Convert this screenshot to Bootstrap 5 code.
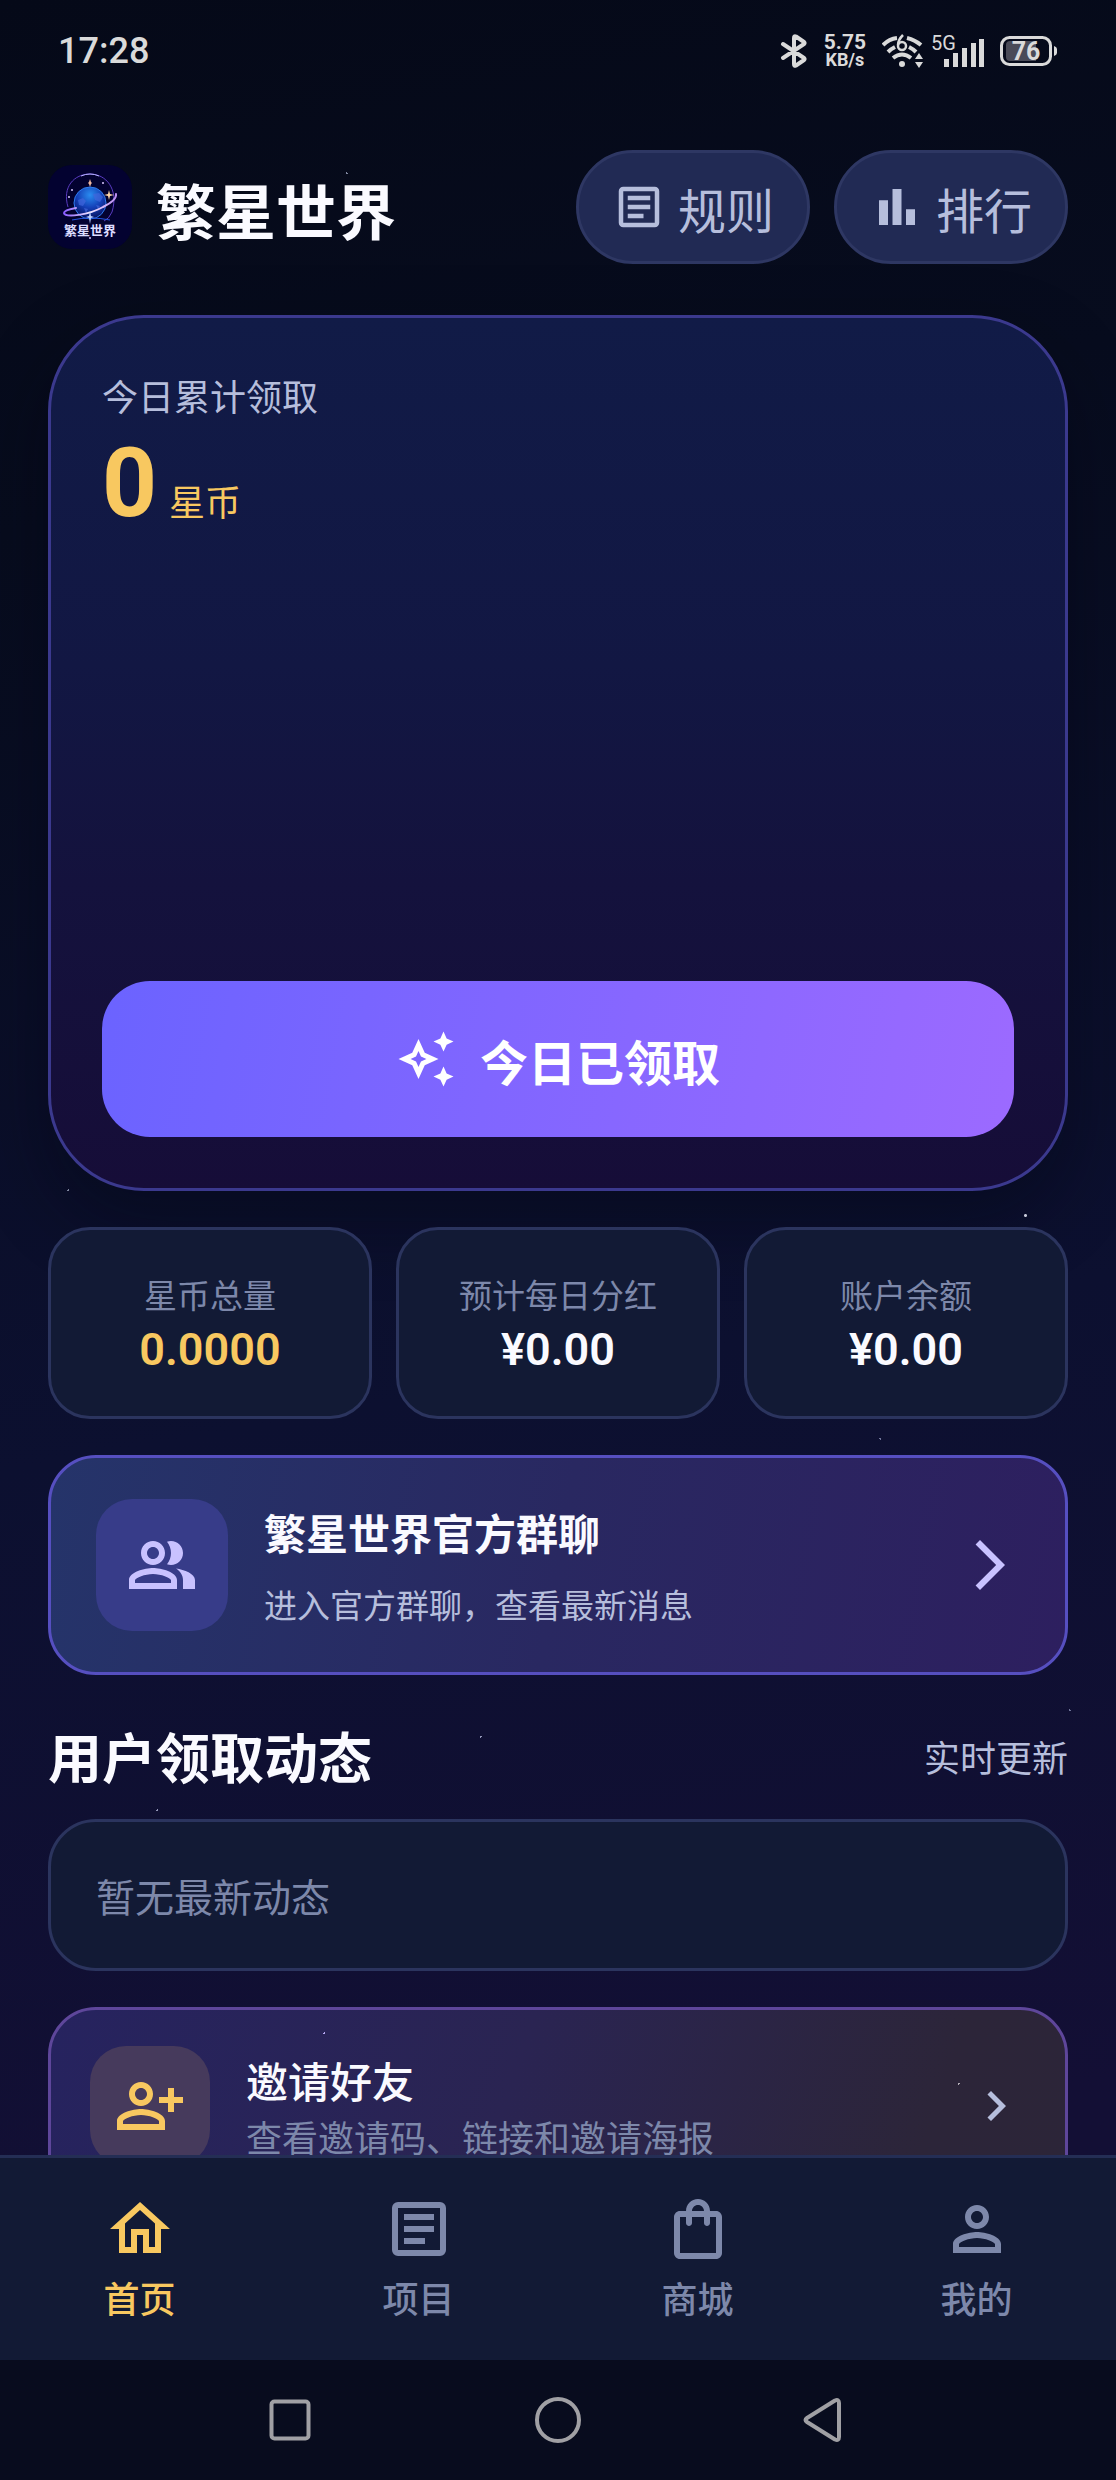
<!DOCTYPE html>
<html lang="zh-CN">
<head>
<meta charset="utf-8">
<meta name="viewport" content="width=device-width, initial-scale=1">
<title>繁星世界</title>
<link href="https://cdn.jsdelivr.net/npm/bootstrap@5.3.0/dist/css/bootstrap.min.css" rel="stylesheet">
<style>
  :root {
    --gold: #f8c860;
    --ink: #fafaff;
    --soft: #b6bedc;
    --dim: #7d88aa;
    --panel: #121a35;
    --line: #2b345e;
  }
  body {
    font-family: "Noto Sans CJK SC", "Noto Sans", sans-serif;
    line-height: 1.45;
    color: var(--ink);
    background: linear-gradient(170deg, #050918 0%, #070c1e 20%, #0c1030 55%, #130f35 85%, #130f35 100%);
  }
  .latin { font-family: Roboto, "Noto Sans CJK SC", sans-serif; line-height: 1.172; }
  svg { display: block; flex: none; fill: currentColor; }
  .min-h-0 { min-height: 0; }
  .fs-33 { font-size: 33px; line-height: 48px; }
  .fs-36 { font-size: 36px; line-height: 52px; }
  .fs-39 { font-size: 39px; line-height: 56px; }
  .fs-42 { font-size: 42px; line-height: 61px; }
  .fs-48 { font-size: 48px; }
  .text-soft { color: var(--soft); }
  .text-dim { color: var(--dim); }
  .text-gold { color: var(--gold); }
  .text-ink { color: var(--ink); }
  .gap-12 { gap: 12px; }
  .gap-24 { gap: 24px; }
  .gap-36 { gap: 36px; }

  .status-bar { height: 102px; padding: 0 58px; color: #dadada; }
  .status-icons { gap: 16px; }
  .net-speed { font-size: 21px; line-height: 18px; }
  .net-speed small { font-size: 18px; }

  .scroller { padding: 0 48px; overflow-y: auto; scrollbar-width: none; }
  .scroller::-webkit-scrollbar { display: none; }
  .app-header { padding: 48px 0 51px; }
  .app-logo { border-radius: 24px; }
  .app-title { font-size: 60px; line-height: 88px; }

  .pill { height: 114px; padding: 0 33px; border: 3px solid #2e3763; border-radius: 57px; background: #212a54; }
  .pill:hover { background: #29336a; }

  .hero { min-height: 876px; padding: 51px; border: 3px solid #3b398e; border-radius: 96px;
    background: linear-gradient(180deg, #111b47 0%, #121743 40%, #14123d 65%, #160d38 100%);
    box-shadow: 0 30px 72px rgba(3, 6, 16, .38); }
  .hero-count { font-size: 96px; }
  .hero-total { padding-top: 6px; }
  .claim { height: 156px; border: 0; border-radius: 48px; background: linear-gradient(100deg, #6b63ff, #9c6aff); }

  .panel { border: 3px solid var(--line); background: var(--panel); }
  .stats { padding: 36px 0; }
  .stat { padding: 40px 12px 39px; gap: 6px; border-radius: 42px; }
  .stat-value { font-size: 45px; font-weight: 600; }

  .link-card { border: 3px solid; border-radius: 48px; }
  .chat-card { padding: 41px 45px; border-color: #564fc0; background: linear-gradient(100deg, #25346a, #292861 50%, #2d1f5f); }
  .chat-text { gap: 18px; }
  .chat-tile { width: 132px; height: 132px; border-radius: 36px; color: #c9c2ff; background: #373c89; }
  .chat-arrow { color: #c9c2ff; }

  .section-head { padding: 42px 0 24px; }
  .section-title { font-size: 54px; line-height: 78px; }
  .feed-empty { padding: 45px; margin-bottom: 36px; border-radius: 48px; }

  .invite-card { padding: 36px 39px; border-color: #5e469a; background: linear-gradient(110deg, #26235f, #2a2452 45%, #2c2539 85%, #2c2538); }
  .invite-tile { width: 120px; height: 120px; border-radius: 36px; color: var(--gold); background: #463a5c; }

  .tab-bar { border-top: 3px solid #242e55; background: var(--panel); }
  .tab { padding: 35px 0 37px; gap: 6px; }
  .system-bar { height: 120px; background: #080c1e; color: #a0a0a4; gap: 219px; }
  .system-bar button { padding: 0; border: 0; background: none; color: inherit; }

  .sky { pointer-events: none; inset: 0; background-repeat: no-repeat; background-size: 3px 3px;
    background-image:
      radial-gradient(#8088a0 1px, transparent 1px), radial-gradient(#8088a0 1px, transparent 1px),
      radial-gradient(#c5c8d8 1px, transparent 2px), radial-gradient(#70759a 1px, transparent 1px),
      radial-gradient(#70759a 1px, transparent 1px), radial-gradient(#9296b8 1px, transparent 1px),
      radial-gradient(#9296b8 1px, transparent 1px), radial-gradient(#b4a8f0 1px, transparent 1px),
      radial-gradient(#b5afb8 1px, transparent 1px);
    background-position: 31% 172px, 6% 1189px, 92% 1214px, 79% 1437px, 96% 1709px, 43% 1735px, 14% 1809px, 29% 2032px, 86% 2082px; }
</style>
<script src="https://cdn.jsdelivr.net/npm/bootstrap@5.3.0/dist/js/bootstrap.bundle.min.js" defer></script>
</head>
<body class="vh-100 d-flex flex-column position-relative overflow-hidden">

<div class="status-bar latin d-flex align-items-center justify-content-between flex-shrink-0">
  <time class="fs-36 fw-medium">17:28</time>
  <div class="status-icons d-flex align-items-center">
    <svg width="28" height="34" viewBox="0 0 28 34" role="img" aria-label="蓝牙"><path d="M3 10 24 24Q25 25 24 26L16 31.500Q14 32.500 14 30V4Q14 1.500 16 2.500L24 8Q25 9 24 10L3 24" fill="none" stroke="currentColor" stroke-width="4" stroke-linejoin="round" stroke-linecap="round"/></svg>
    <div class="net-speed text-center fw-bold d-flex flex-column"><span>5.75</span><small class="fw-bold">KB/s</small></div>
    <svg width="102" height="36" viewBox="0 0 102 36" role="img" aria-label="Wi-Fi 6 与 5G 信号">
      <g fill="none" stroke="currentColor" stroke-width="4">
        <path d="M1 12Q7 6 15 5M25 5Q33 7 39 12M6 19Q9 16 13 14M27 14Q31 16 34 19M11 25Q20 18 29 25"/>
        <path d="M21 2Q16 7 16 12" stroke-width="2.500"/><circle cx="20" cy="13" r="4" stroke-width="2.500"/>
      </g>
      <circle cx="20" cy="31" r="3"/><path d="M33 26l4-6 4 6zM33 29h8l-4 6z"/>
      <path d="M62 26h5v8h-5zM71 20h5v14h-5zM80 15h5v19h-5zM89 10h5v24h-5zM97 6h5v28h-5z"/>
      <text x="49" y="17" font-size="20">5G</text>
    </svg>
    <svg width="58" height="32" viewBox="0 0 58 32" role="img" aria-label="电量 76%">
      <rect x="1.500" y="2.500" width="49" height="27" rx="8" fill="none" stroke="currentColor" stroke-width="3"/>
      <path d="M10 6h26v20H10a4 4 0 0 1-4-4V10a4 4 0 0 1 4-4z" fill="#4a4b58"/>
      <path d="M54 11q3 1 3 3v4q0 2-3 3z"/>
      <text x="26" y="25" font-size="25" font-weight="700" text-anchor="middle">76</text>
    </svg>
  </div>
</div>

<main class="scroller flex-grow-1 min-h-0">
  <header class="app-header d-flex align-items-center gap-24">
    <svg class="app-logo" width="84" height="84" viewBox="0 0 84 84" role="img" aria-label="繁星世界标志">
      <defs>
        <radialGradient id="globe" cx=".5" cy=".25" r=".8"><stop offset="0" stop-color="#2a8cf0"/><stop offset=".5" stop-color="#1440b8"/><stop offset="1" stop-color="#070a50"/></radialGradient>
        <linearGradient id="ring"><stop offset="0" stop-color="#8a5cff"/><stop offset=".5" stop-color="#f0e4ff"/><stop offset="1" stop-color="#b98cf0"/></linearGradient>
      </defs>
      <rect width="84" height="84" fill="#030230"/>
      <path d="M20 42C14 22 26 9 42 9s29 15 22 38q-3 7-8 9" fill="none" stroke="#5a3cc0" stroke-width="1"/>
      <path d="M33 11q9-4 18 0" fill="none" stroke="#b8b4ff" stroke-width="1"/>
      <circle cx="42" cy="38" r="16" fill="url(#globe)" stroke="#2f7cf0" stroke-width="1"/>
      <path d="M30 35l5-2 3 3-3 5-4-1zM45 29l6-1 4 4-3 5-5-2zM36 43l4 1-2 4zM48 40l4 1-2 3z" fill="#4266dc" opacity=".7"/>
      <path d="M28 43q-12 2-12 5c1 5 25 2 39-6q14-7 13-13" fill="none" stroke="url(#ring)" stroke-width="2" stroke-linecap="round"/>
      <path d="M24 55q18-4 38 0" fill="none" stroke="#2454e0" stroke-width="1"/>
      <path d="M42 46l1 5 3 1-3 1-1 6-1-6-3-1 3-1z" fill="#bcd0ff"/>
      <path d="M61 25l1 4 4 1-4 1-1 4-1-4-4-1 4-1z" fill="#ffd8a8"/>
      <path d="M42 14l1 3 1 1-1 1-1 3-1-3-1-1 1-1z" fill="#f0b8a0"/>
      <g fill="#d8c8ff"><circle cx="24" cy="25" r="1"/><circle cx="55" cy="18" r="1"/><circle cx="21" cy="32" r="1"/><circle cx="42" cy="73" r="1"/></g>
      <text x="42" y="70" font-size="13" font-weight="700" fill="#dcdcff" text-anchor="middle">繁星世界</text>
    </svg>
    <h1 class="app-title fw-bold m-0 me-auto pt-1 text-nowrap">繁星世界</h1>
    <button type="button" class="pill fs-48 text-soft d-flex align-items-center gap-12 text-nowrap">
      <svg width="54" height="54" viewBox="0 0 24 24" aria-hidden="true"><path d="M19 5v14H5V5h14m0-2H5a2 2 0 0 0-2 2v14a2 2 0 0 0 2 2h14a2 2 0 0 0 2-2V5a2 2 0 0 0-2-2zm-5 14H7v-2h7v2zm3-4H7v-2h10v2zm0-4H7V7h10v2z"/></svg>
      <span class="pt-1">规则</span>
    </button>
    <button type="button" class="pill fs-48 text-soft d-flex align-items-center gap-12 text-nowrap">
      <svg width="54" height="54" viewBox="0 0 24 24" aria-hidden="true"><path d="M4 9h4v11H4zM16 13h4v7h-4zM10 4h4v16h-4z"/></svg>
      <span class="pt-1">排行</span>
    </button>
  </header>

  <section class="hero d-flex flex-column justify-content-between">
    <div>
      <div class="fs-36 text-soft">今日累计领取</div>
      <div class="hero-total latin text-gold d-flex align-items-baseline gap-12">
        <span class="hero-count fw-bold">0</span><span class="fs-36">星币</span>
      </div>
    </div>
    <button type="button" class="claim fs-48 fw-bold text-white w-100 d-flex align-items-center justify-content-center gap-24">
      <svg width="60" height="60" viewBox="0 0 24 24" aria-hidden="true"><path d="M19 9l1.250-2.750L23 5l-2.750-1.250L19 1l-1.250 2.750L15 5l2.750 1.250zM19 15l-1.250 2.750L15 19l2.750 1.250L19 23l1.250-2.750L23 19l-2.750-1.250zM11.500 9.500L9 4 6.500 9.500 1 12l5.500 2.500L9 20l2.500-5.500L17 12zM9.990 12.990L9 15.170l-.990-2.180L5.830 12l2.180-.990L9 8.830l.990 2.180 2.180.990z"/></svg>
      <span class="pt-1">今日已领取</span>
    </button>
  </section>

  <section class="stats d-flex gap-24 text-center">
    <div class="panel stat flex-fill w-100 d-flex flex-column">
      <span class="fs-33 text-dim">星币总量</span><span class="stat-value latin text-gold">0.0000</span>
    </div>
    <div class="panel stat flex-fill w-100 d-flex flex-column">
      <span class="fs-33 text-dim">预计每日分红</span><span class="stat-value latin">¥0.00</span>
    </div>
    <div class="panel stat flex-fill w-100 d-flex flex-column">
      <span class="fs-33 text-dim">账户余额</span><span class="stat-value latin">¥0.00</span>
    </div>
  </section>

  <a href="#chat" class="link-card chat-card d-flex align-items-center gap-36 text-decoration-none">
    <span class="chat-tile d-flex align-items-center justify-content-center flex-shrink-0">
      <svg width="72" height="72" viewBox="0 0 24 24" aria-hidden="true"><path d="M16.670 13.130C18.040 14.060 19 15.320 19 17v3h4v-3c0-2.180-3.570-3.470-6.330-3.870zM15 12c2.210 0 4-1.790 4-4s-1.790-4-4-4c-.470 0-.910.100-1.330.240C14.500 5.270 15 6.580 15 8s-.500 2.730-1.330 3.760c.420.140.860.240 1.330.240zM9 12c2.210 0 4-1.790 4-4s-1.790-4-4-4-4 1.790-4 4 1.790 4 4 4zm0-6c1.100 0 2 .900 2 2s-.900 2-2 2-2-.900-2-2 .900-2 2-2zm0 7c-2.670 0-8 1.340-8 4v3h16v-3c0-2.660-5.330-4-8-4zm6 5H3v-.990C3.200 16.290 6.300 15 9 15s5.800 1.290 6 2v1z"/></svg>
    </span>
    <span class="chat-text d-flex flex-column flex-grow-1">
      <strong class="fs-42 text-ink">繁星世界官方群聊</strong>
      <span class="fs-33 text-soft">进入官方群聊，查看最新消息</span>
    </span>
    <svg class="chat-arrow" width="60" height="60" viewBox="0 0 24 24" aria-hidden="true"><path d="M6.230 20.230L8 22l10-10L8 2 6.230 3.770 14.460 12z"/></svg>
  </a>

  <div class="section-head d-flex align-items-center justify-content-between">
    <h2 class="section-title fw-bold m-0">用户领取动态</h2>
    <span class="fs-36 text-soft">实时更新</span>
  </div>
  <div class="panel feed-empty fs-39 text-dim">暂无最新动态</div>

  <a href="#invite" class="link-card invite-card d-flex align-items-center gap-36 text-decoration-none">
    <span class="invite-tile d-flex align-items-center justify-content-center flex-shrink-0">
      <svg width="72" height="72" viewBox="0 0 24 24" aria-hidden="true"><path d="M20 9V6h-2v3h-3v2h3v3h2v-3h3V9zM9 12c2.210 0 4-1.790 4-4s-1.790-4-4-4-4 1.790-4 4 1.790 4 4 4zm0-6c1.100 0 2 .900 2 2s-.900 2-2 2-2-.900-2-2 .900-2 2-2zM9 13c-2.670 0-8 1.340-8 4v3h16v-3c0-2.660-5.330-4-8-4zm6 5H3v-.990C3.200 16.290 6.300 15 9 15s5.800 1.290 6 2v1z"/></svg>
    </span>
    <span class="d-flex flex-column flex-grow-1">
      <span class="fs-42 fw-medium text-ink">邀请好友</span>
      <span class="fs-36 text-dim">查看邀请码、链接和邀请海报</span>
    </span>
    <svg class="text-soft" width="60" height="60" viewBox="0 0 24 24" aria-hidden="true"><path d="M10 6L8.590 7.410 13.170 12l-4.580 4.590L10 18l6-6z"/></svg>
  </a>
</main>

<nav class="tab-bar nav nav-justified flex-shrink-0 fs-36 fw-medium" aria-label="主导航">
  <a href="#home" aria-current="page" class="tab nav-item text-gold d-flex flex-column align-items-center text-decoration-none">
    <svg width="72" height="72" viewBox="0 0 24 24" aria-hidden="true"><path d="M12 5.690l5 4.500V18h-2v-6H9v6H7v-7.810l5-4.500M12 3L2 12h3v8h6v-6h2v6h6v-8h3z"/></svg>首页</a>
  <a href="#projects" class="tab nav-item text-dim d-flex flex-column align-items-center text-decoration-none">
    <svg width="72" height="72" viewBox="0 0 24 24" aria-hidden="true"><path d="M19 5v14H5V5h14m0-2H5a2 2 0 0 0-2 2v14a2 2 0 0 0 2 2h14a2 2 0 0 0 2-2V5a2 2 0 0 0-2-2zm-5 14H7v-2h7v2zm3-4H7v-2h10v2zm0-4H7V7h10v2z"/></svg>项目</a>
  <a href="#mall" class="tab nav-item text-dim d-flex flex-column align-items-center text-decoration-none">
    <svg width="72" height="72" viewBox="0 0 24 24" aria-hidden="true"><path d="M18 6h-2c0-2.210-1.790-4-4-4S8 3.790 8 6H6c-1.100 0-2 .900-2 2v12c0 1.100.900 2 2 2h12c1.100 0 2-.900 2-2V8c0-1.100-.900-2-2-2zm-6-2c1.100 0 2 .900 2 2h-4c0-1.100.900-2 2-2zm6 16H6V8h2v2c0 .550.450 1 1 1s1-.450 1-1V8h4v2c0 .550.450 1 1 1s1-.450 1-1V8h2v12z"/></svg>商城</a>
  <a href="#me" class="tab nav-item text-dim d-flex flex-column align-items-center text-decoration-none">
    <svg width="72" height="72" viewBox="0 0 24 24" aria-hidden="true"><path d="M12 6c1.100 0 2 .900 2 2s-.900 2-2 2-2-.900-2-2 .900-2 2-2m0 9c2.700 0 5.800 1.290 6 2v1H6v-.990c.200-.720 3.300-2.010 6-2.010m0-11C9.790 4 8 5.790 8 8s1.790 4 4 4 4-1.790 4-4-1.790-4-4-4zm0 9c-2.670 0-8 1.340-8 4v3h16v-3c0-2.660-5.330-4-8-4z"/></svg>我的</a>
</nav>

<div class="system-bar d-flex align-items-center justify-content-center flex-shrink-0">
  <button type="button" aria-label="最近任务"><svg width="48" height="48" viewBox="0 0 48 48"><rect x="4.500" y="5.500" width="37" height="37" rx="3" fill="none" stroke="currentColor" stroke-width="4"/></svg></button>
  <button type="button" aria-label="主屏幕"><svg width="48" height="48" viewBox="0 0 48 48"><circle cx="24" cy="24" r="21" fill="none" stroke="currentColor" stroke-width="4"/></svg></button>
  <button type="button" aria-label="返回"><svg width="48" height="48" viewBox="0 0 48 48"><path d="M6 22L34 4.500Q38 3 38 7V41Q38 45 34 43.500L6 26Q3 24 6 22z" fill="none" stroke="currentColor" stroke-width="4" stroke-linejoin="round"/></svg></button>
</div>

<div class="sky position-absolute" aria-hidden="true"></div>
</body>
</html>
